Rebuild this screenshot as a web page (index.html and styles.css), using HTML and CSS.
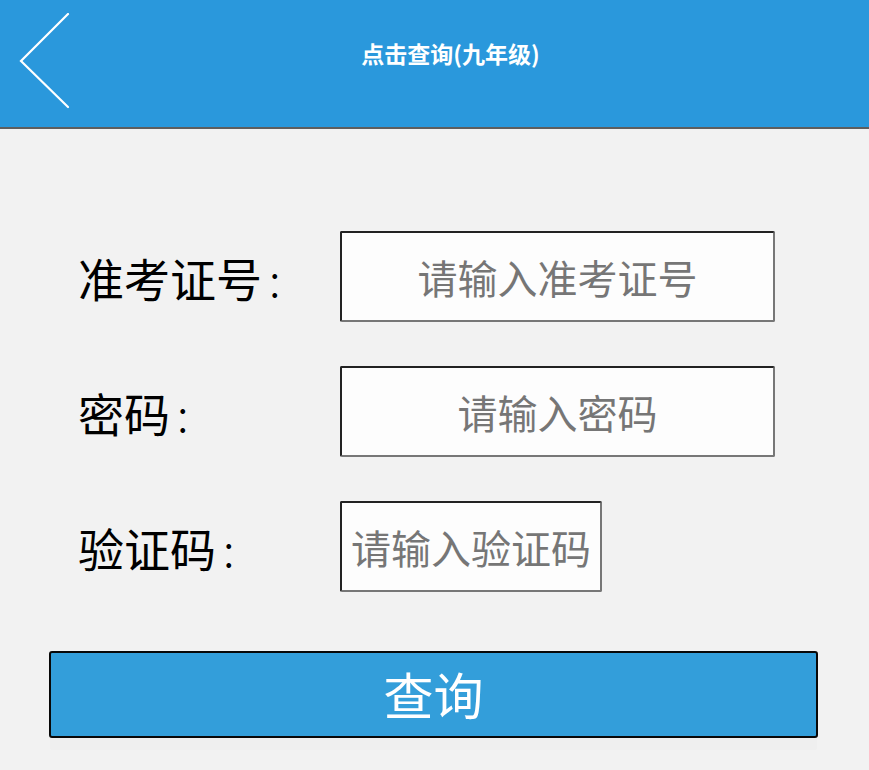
FILE: index.html
```html
<!DOCTYPE html>
<html lang="zh-CN">
<head>
<meta charset="utf-8">
<title>点击查询(九年级)</title>
<link rel="stylesheet" href="styles.css">
</head>
<body>
<header class="topbar">
  <a class="back" href="#" aria-label="返回">
    <svg width="52" height="100" viewBox="0 0 52 100">
      <polyline points="49,1 2,48 49,94" fill="none" stroke="#ffffff" stroke-width="2.2" stroke-linecap="round" stroke-linejoin="miter"/>
    </svg>
  </a>
  <h1 class="title">点击查询(九年级)</h1>
</header>
<main class="form">
  <div class="row">
    <label class="label">准考证号<span class="colon">:</span></label>
    <input class="field field-wide" type="text" placeholder="请输入准考证号">
  </div>
  <div class="row">
    <label class="label">密码<span class="colon">:</span></label>
    <input class="field field-wide" type="password" placeholder="请输入密码">
  </div>
  <div class="row">
    <label class="label">验证码<span class="colon">:</span></label>
    <input class="field field-short" type="text" placeholder="请输入验证码">
  </div>
  <button class="submit" type="button">查询</button>
</main>
</body>
</html>
```
FILE: styles.css
```css
html, body {
  margin: 0;
  padding: 0;
}
body {
  background: #f2f2f2;
  font-family: "Noto Sans CJK SC", "Noto Sans", sans-serif;
  width: 869px;
  height: 770px;
  overflow: hidden;
}
.topbar {
  height: 127px;
  background: #2a98dc;
  border-bottom: 2px solid #5e5e5e;
  display: flex;
  align-items: flex-start;
}
.back {
  display: block;
  margin-left: 19px;
  margin-top: 13px;
  width: 52px;
  height: 100px;
}
.back svg {
  display: block;
}
.title {
  flex: 1;
  margin: 0;
  padding-top: 37px;
  padding-right: 39px;
  text-align: center;
  color: #ffffff;
  font-size: 23px;
  font-weight: bold;
  line-height: 32px;
}
.form {
  padding: 102px 0 0 0;
  display: flex;
  flex-direction: column;
}
.row {
  display: flex;
  align-items: center;
  margin-left: 78px;
  margin-bottom: 44px;
}
.row:nth-child(3) {
  margin-bottom: 59px;
}
.label {
  width: 262px;
  font-size: 46px;
  color: #000000;
  line-height: 60px;
}
.colon {
  margin-left: 7px;
  font-weight: 300;
}
.field {
  box-sizing: border-box;
  height: 91px;
  margin: 0;
  padding: 0;
  background: #fdfdfd;
  border-style: solid;
  border-width: 2px;
  border-color: #222222 #777777 #777777 #222222;
  border-radius: 2px;
  font-family: "Noto Sans CJK SC", "Noto Sans", sans-serif;
  font-size: 40px;
  text-align: center;
  color: #333;
  outline: none;
}
.field::placeholder {
  color: #767676;
  opacity: 1;
}
.field-wide {
  width: 435px;
}
.field-short {
  width: 262px;
}
.submit {
  box-sizing: border-box;
  margin-left: 49px;
  width: 769px;
  height: 87px;
  background: #339eda;
  border: 2px solid #080808;
  border-radius: 3px;
  color: #ffffff;
  font-family: "Noto Sans CJK SC", "Noto Sans", sans-serif;
  font-size: 50px;
  line-height: 1;
  padding: 0 0 4px 0;
  box-shadow: 0 13px 0 -1px #efefef;
}
```
